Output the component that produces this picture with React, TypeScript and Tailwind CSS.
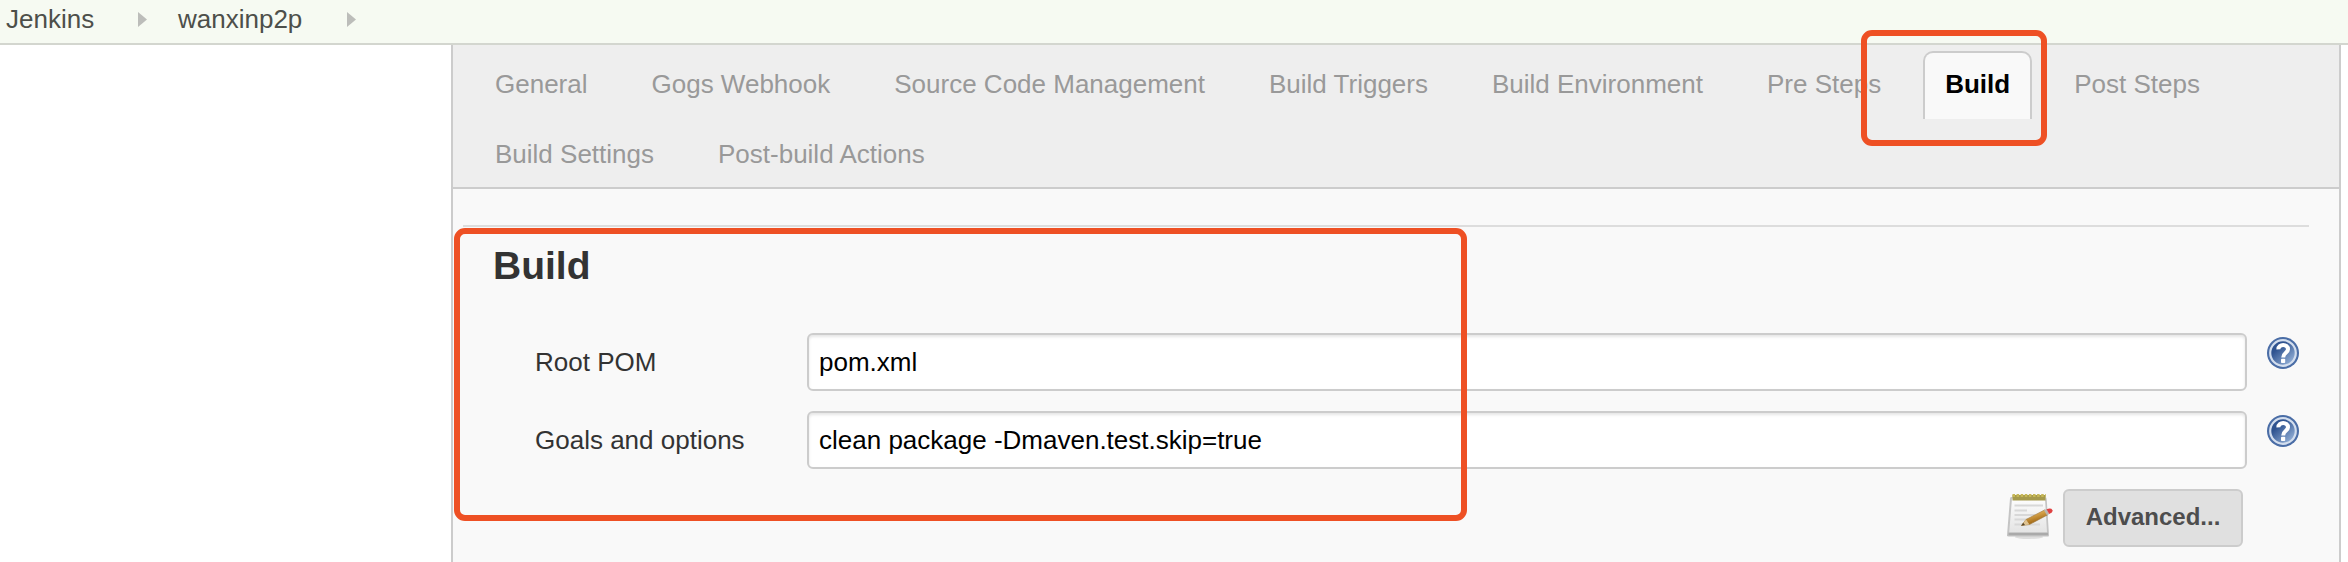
import React from "react";

const tabs = [
  "General",
  "Gogs Webhook",
  "Source Code Management",
  "Build Triggers",
  "Build Environment",
  "Pre Steps",
  "Build",
  "Post Steps",
  "Build Settings",
  "Post-build Actions",
];

const fields = [
  { label: "Root POM", value: "pom.xml" },
  { label: "Goals and options", value: "clean package -Dmaven.test.skip=true" },
];

function Arrow() {
  return (
    <svg width="9" height="15" viewBox="0 0 9 15" className="mt-[2px] shrink-0">
      <path d="M0 0 L9 7.5 L0 15 Z" fill="#bcbdba" />
    </svg>
  );
}

function HelpIcon() {
  return (
    <svg width="32" height="32" viewBox="0 0 32 32" className="mt-1 ml-5 shrink-0">
      <defs>
        <linearGradient id="help" x1="0.1" y1="0.1" x2="0.9" y2="0.95">
          <stop offset="0.25" stopColor="#2f5390" />
          <stop offset="1" stopColor="#9db9de" />
        </linearGradient>
      </defs>
      <circle cx="16" cy="16" r="16" fill="#4a6da6" />
      <circle cx="16" cy="16" r="12.800" fill="url(#help)" stroke="#d3deee" strokeWidth="2.200" />
      <path
        d="M11.4 12.4 C11.200 6.600 21.200 6.600 21 12.400 C20.900 16 16.200 15.800 16.200 20.600"
        fill="none"
        stroke="#fff"
        strokeWidth="4"
      />
      <rect x="14" y="21.800" width="4.200" height="4.200" rx="0.800" fill="#fff" />
    </svg>
  );
}

function NotepadIcon() {
  return (
    <svg width="48" height="48" viewBox="0 0 48 48" className="mr-2 mt-[5px] shrink-0">
      <defs>
        <linearGradient id="paper" x1="0" y1="0" x2="0" y2="1">
          <stop offset="0" stopColor="#fdfdfd" />
          <stop offset="1" stopColor="#e4e4e4" />
        </linearGradient>
        <linearGradient id="pencil" x1="0" y1="0" x2="0.5" y2="1">
          <stop offset="0.3" stopColor="#e9b75a" />
          <stop offset="0.8" stopColor="#a8701d" />
        </linearGradient>
      </defs>
      <ellipse cx="22" cy="43" rx="14" ry="2" fill="#dedede" />
      <path d="M4 3 H38 Q39.500 3 39.700 5 L42 41 Q42 42.500 41 42.500 H1.500 Q-0.300 42.500 0 41 L3 4.500 Q3.200 3 4 3 Z" fill="#c4c4c4" />
      <path d="M5 4.500 H38 L40 38.500 H2.200 Z" fill="url(#paper)" />
      <path d="M1.500 40 H41" stroke="#aaaaaa" strokeWidth="2.400" />
      <path d="M7.500 11.500 H36 M7.500 16.500 H20 M7.500 21 H28 M7.500 25.500 H22 M7.500 30.500 H33" stroke="#d8d8d8" strokeWidth="1.800" />
      <rect x="5.500" y="1" width="33" height="5.500" fill="#a59a4c" />
      <path d="M5.500 1.500 H39" stroke="#c6b756" strokeWidth="3" strokeDasharray="2.500 1.600" />
      <path d="M14.500 31.500 L19 25.500 L38 15.800 L40.800 20.800 L22.500 30.500 Z" fill="url(#pencil)" stroke="#9b743a" strokeWidth="0.600" />
      <path d="M14.500 31.500 L19 25.500 L22.500 30.500 Z" fill="#dfc391" />
      <path d="M14.200 31.800 L16.200 28.800 L18 31.100 Z" fill="#56462b" />
      <path d="M37 16.300 L39.500 15.200 L42.200 20 L39.900 21.300 Z" fill="#b9b7b0" />
      <path d="M39.500 15.200 Q44.500 13.500 45.700 16.500 Q46 18.500 42.200 20 Z" fill="#df4141" />
    </svg>
  );
}

export default function App() {
  return (
    <div className="relative flex h-[562px] w-[2348px] flex-col overflow-hidden bg-white font-['Liberation_Sans',Arial,sans-serif] text-[26px] leading-[30px] text-[#333]">
      <header className="flex h-[45px] shrink-0 items-center border-b-2 border-[#d3d6cf] bg-[#f6faf2] pb-[6px] pl-[6px] text-[#4d4f4a]">
        <span className="w-[132px]">Jenkins</span>
        <Arrow />
        <span className="ml-[31px] w-[169px]">wanxinp2p</span>
        <Arrow />
      </header>

      <main className="ml-[451px] flex w-[1890px] grow flex-col border-x-2 border-[#ccc] bg-[#f9f9f9]">
        <nav className="flex h-[144px] shrink-0 flex-wrap content-start gap-x-5 gap-y-[2px] border-b-2 border-[#ccc] bg-[#eee] pt-[6px] pr-[100px] pl-5">
          {tabs.map((tab) => (
            <a
              key={tab}
              className={
                tab === "Build"
                  ? "h-[68px] rounded-t-[10px] border-2 border-b-0 border-[#ccc] bg-[#f9f9f9] px-5 pt-4 font-bold text-black"
                  : "h-[68px] border-2 border-transparent px-5 pt-4 text-[#999]"
              }
            >
              {tab}
            </a>
          ))}
        </nav>

        <section className="mt-9 ml-[10px] w-[1846px] border-t-2 border-[#ddd]">
          <h2 className="mt-4 pl-[30px] text-[39px] leading-[46px] font-bold">Build</h2>
          <div className="mt-11 flex flex-col gap-5">
            {fields.map((field) => (
              <div key={field.label} className="flex h-[58px]">
                <label className="w-[344px] shrink-0 pt-[14px] pl-[72px]">{field.label}</label>
                <input
                  readOnly
                  defaultValue={field.value}
                  className="h-[58px] w-[1440px] shrink-0 rounded-[6px] border-2 border-[#ccc] bg-white px-[10px] text-black shadow-[inset_0_2px_3px_rgba(0,0,0,0.1)] outline-none"
                />
                <HelpIcon />
              </div>
            ))}
          </div>
          <div className="mt-5 flex justify-end pr-[66px]">
            <NotepadIcon />
            <button className="h-[58px] w-[180px] rounded-[6px] border-2 border-[#ccc] bg-[#e0e0e0] pb-[2px] text-[24px] font-bold text-[#4d4d4d]">
              Advanced...
            </button>
          </div>
        </section>
      </main>

      <div className="absolute top-[30px] left-[1861px] h-[116px] w-[186px] rounded-[11px] border-6 border-[#ee5024]" />
      <div className="absolute top-[228px] left-[454px] h-[293px] w-[1013px] rounded-[11px] border-6 border-[#ee5024]" />
    </div>
  );
}
